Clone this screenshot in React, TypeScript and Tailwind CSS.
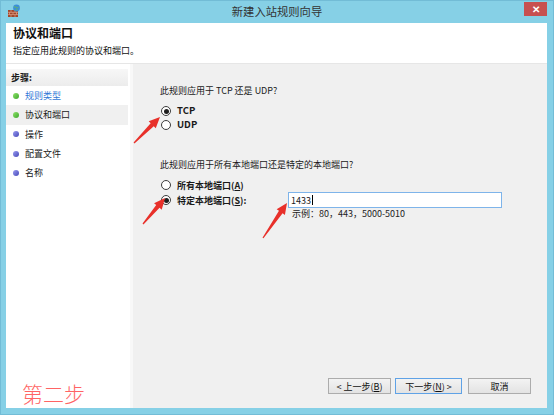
import React from "react";

const steps = [
  { t: "规则类型", done: true, link: true },
  { t: "协议和端口", done: true, active: true },
  { t: "操作" },
  { t: "配置文件" },
  { t: "名称" },
];

// red annotation arrow, tail -> tip
function arrowPoints(x1: number, y1: number, x2: number, y2: number) {
  const dx = x2 - x1, dy = y2 - y1;
  const len = Math.hypot(dx, dy);
  const ux = dx / len, uy = dy / len;
  const nx = -uy, ny = ux;
  const headLen = 11, headW = 5, neckW = 2.2, tailW = 0.6;
  const bx = x2 - ux * headLen, by = y2 - uy * headLen;
  const pts = [
    [x1 + nx * tailW, y1 + ny * tailW],
    [bx + nx * neckW, by + ny * neckW],
    [bx + nx * headW, by + ny * headW],
    [x2, y2],
    [bx - nx * headW, by - ny * headW],
    [bx - nx * neckW, by - ny * neckW],
    [x1 - nx * tailW, y1 - ny * tailW],
  ];
  return pts.map((p) => p.join(",")).join(" ");
}

function Radio({ checked }: { checked?: boolean }) {
  return (
    <span className="flex h-[10px] w-[10px] shrink-0 items-center justify-center rounded-full border border-[#3c3c3c] bg-white">
      {checked && <span className="h-[5px] w-[5px] rounded-full bg-[#1e1e1e]" />}
    </span>
  );
}

function FirewallIcon() {
  return (
    <svg width="14" height="14" viewBox="0 0 14 14">
      <rect x="1" y="6" width="10" height="7" fill="#a0462c" />
      <path d="M1 8.3h10M1 10.6h10M4 6v2.3M8 6v2.3M2.5 8.3v2.3M6 8.3v2.3M9.5 8.3v2.3M4 10.6V13M8 10.6V13" stroke="#e8b09a" strokeWidth="0.6" />
      <circle cx="9.5" cy="4" r="3.4" fill="#3b8fd9" />
      <path d="M7 3.2c1-.8 2-.2 2.6.4.4.6 1.3.4 1.8-.3M8.6 6.4c.2-.9.8-1.2 1.6-1" stroke="#6fc24a" strokeWidth="1" fill="none" />
    </svg>
  );
}

function Button({ children, focused, w }: { children: React.ReactNode; focused?: boolean; w: string }) {
  return (
    <button
      className={`${w} flex h-[16px] items-center justify-center border bg-gradient-to-b from-[#f3f3f3] to-[#e3e3e3] text-[9px] leading-none text-[#111] ${
        focused ? "border-[#5fa2e6]" : "border-[#acacac]"
      }`}
    >
      {children}
    </button>
  );
}

export default function App() {
  return (
    <div className="relative flex h-[415px] w-[554px] flex-col overflow-hidden border border-[#72bcd6] bg-[#86d0e6] font-['Noto_Sans_CJK_SC',sans-serif] text-[#1a1a1a]">
      {/* title bar */}
      <div className="relative flex h-[22px] shrink-0 items-center">
        <div className="absolute left-[6px] top-[3px]">
          <FirewallIcon />
        </div>
        <div className="w-full text-center text-[11.3px] leading-none text-[#333]">新建入站规则向导</div>
        <div className="absolute right-[6px] top-[1px] flex h-[14px] w-[23px] items-center justify-center bg-[#c75050] text-[10px] font-bold leading-none text-white">
          ✕
        </div>
      </div>

      {/* client area */}
      <div className="ml-[5px] mr-[6px] flex flex-1 flex-col bg-white">
        <div className="h-[41px] shrink-0 border-b border-[#e6e6e6] pl-[7px] pt-[1px]">
          <div className="text-[12px] font-bold leading-[18px] text-[#111]">协议和端口</div>
          <div className="mt-[3px] text-[9px] leading-[12px] text-[#111]">指定应用此规则的协议和端口。</div>
        </div>

        <div className="flex flex-1">
          {/* steps */}
          <div className="flex w-[127px] shrink-0 flex-col border-r-[3px] border-[#f8f8f8] pt-[5px]">
            <div className="mr-[2px] flex h-[17px] items-center bg-gradient-to-b from-[#f7f7f7] to-[#ececec] pl-[5px] text-[9px] font-bold leading-none">
              步骤:
            </div>
            {steps.map((s) => (
              <div
                key={s.t}
                className={`mr-[2px] flex h-[19.3px] items-center gap-[6px] pl-[7px] text-[9px] leading-none ${s.active ? "bg-[#f0f0f0]" : ""}`}
              >
                <span
                  className={`h-[6px] w-[6px] rounded-full ${
                    s.done ? "bg-gradient-to-br from-[#8ee26a] to-[#3aa82a]" : "bg-gradient-to-br from-[#9a9af0] to-[#4848b8]"
                  }`}
                />
                <span className={s.link ? "text-[#2f78d6]" : "text-[#1a1a1a]"}>{s.t}</span>
              </div>
            ))}
            <div className="mt-auto pb-[2px] pl-[16px] text-[21px] font-light leading-[26px] text-[#ff6464]">第二步</div>
          </div>

          {/* main panel */}
          <div className="flex flex-1 flex-col bg-[#f0f0f0] pl-[27px]">
            <div className="mt-[21px] text-[9px] leading-[12px]">此规则应用于 TCP 还是 UDP?</div>
            <div className="mt-[7px] flex h-[14px] items-center gap-[6px] pl-[1px] text-[9.5px] font-bold leading-none">
              <Radio checked />
              TCP
            </div>
            <div className="flex h-[14px] items-center gap-[6px] pl-[1px] text-[9.5px] font-bold leading-none">
              <Radio />
              UDP
            </div>

            <div className="mt-[27px] text-[9px] leading-[12px]">此规则应用于所有本地端口还是特定的本地端口?</div>
            <div className="mt-[7px] flex h-[14px] items-center gap-[6px] pl-[1px] text-[9px] font-bold leading-none">
              <Radio />
              <span>
                所有本地端口(<u>A</u>)
              </span>
            </div>
            <div className="flex items-start pl-[1px]">
              <div className="flex h-[16px] w-[127px] items-center gap-[6px] text-[9px] font-bold leading-none">
                <Radio checked />
                <span>
                  特定本地端口(<u>S</u>):
                </span>
              </div>
              <div className="flex flex-col">
                <div className="flex h-[16px] w-[214px] items-center border border-[#7eb4ea] bg-white pl-[2px] text-[9px] leading-none">
                  1433<span className="ml-[1px] h-[10px] w-px bg-black" />
                </div>
                <div className="pl-[4px] text-[9px] leading-[11px] text-[#222]">示例：80，443，5000-5010</div>
              </div>
            </div>

            <div className="mb-[14px] mr-[16px] mt-auto flex justify-end">
              <Button w="w-[63px]">
                &lt; 上一步(<u>B</u>)
              </Button>
              <div className="w-[4px]" />
              <Button w="w-[67px]" focused>
                下一步(<u>N</u>) &gt;
              </Button>
              <div className="w-[6px]" />
              <Button w="w-[63px]">取消</Button>
            </div>
          </div>
        </div>
      </div>
      <div className="h-[6px] shrink-0" />

      {/* annotation arrows */}
      <svg className="pointer-events-none absolute left-[-1px] top-[-1px]" width="554" height="415">
        <polygon points={arrowPoints(134, 143, 160, 117)} fill="#e8302a" />
        <polygon points={arrowPoints(143, 224, 165, 198)} fill="#e8302a" />
        <polygon points={arrowPoints(263, 238, 287, 203)} fill="#e8302a" />
      </svg>
    </div>
  );
}
